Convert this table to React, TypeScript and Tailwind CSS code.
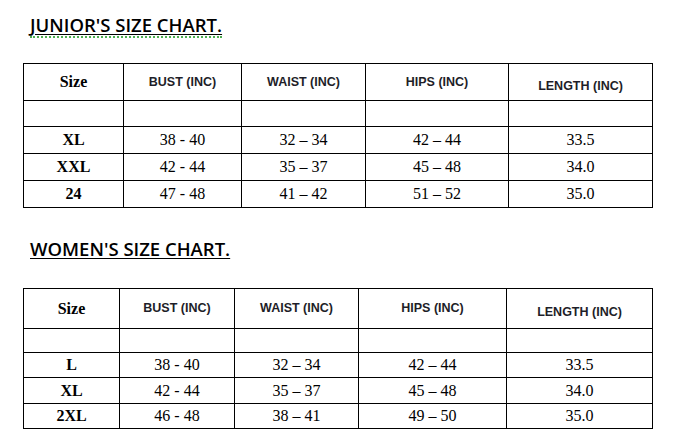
const junior = [
  { size: "XL", bust: "38 - 40", waist: "32 – 34", hips: "42 – 44", length: "33.5" },
  { size: "XXL", bust: "42 - 44", waist: "35 – 37", hips: "45 – 48", length: "34.0" },
  { size: "24", bust: "47 - 48", waist: "41 – 42", hips: "51 – 52", length: "35.0" },
];

const women = [
  { size: "L", bust: "38 - 40", waist: "32 – 34", hips: "42 – 44", length: "33.5" },
  { size: "XL", bust: "42 - 44", waist: "35 – 37", hips: "45 – 48", length: "34.0" },
  { size: "2XL", bust: "46 - 48", waist: "38 – 41", hips: "49 – 50", length: "35.0" },
];

type Row = (typeof junior)[number];

const cell = "border border-black text-center p-0";
const head = "font-['Liberation_Sans',sans-serif] font-bold text-[12.5px] text-[#1e1e28]";
const serif = "font-['Liberation_Serif',serif] text-[16px] text-black";
const title = "font-['Open_Sans',sans-serif] font-semibold text-[18.5px] text-black underline underline-offset-2";

function SizeTable({
  rows,
  widths,
  heights,
}: {
  rows: Row[];
  widths: string[];
  heights: string[];
}) {
  return (
    <table className="ml-[23px] border-collapse table-fixed">
      <colgroup>
        {widths.map((w, i) => (
          <col key={i} className={w} />
        ))}
      </colgroup>
      <tbody>
        <tr className={heights[0]}>
          <td className={`${cell} ${serif} font-bold`}>Size</td>
          <td className={`${cell} ${head}`}>BUST (INC)</td>
          <td className={`${cell} ${head}`}>WAIST (INC)</td>
          <td className={`${cell} ${head}`}>HIPS (INC)</td>
          <td className={`${cell} ${head} pt-[8px]`}>LENGTH (INC)</td>
        </tr>
        <tr className={heights[1]}>
          <td className={cell} />
          <td className={cell} />
          <td className={cell} />
          <td className={cell} />
          <td className={cell} />
        </tr>
        {rows.map((r, i) => (
          <tr key={r.size} className={heights[i + 2]}>
            <td className={`${cell} ${serif} font-bold`}>{r.size}</td>
            <td className={`${cell} ${serif}`}>{r.bust}</td>
            <td className={`${cell} ${serif}`}>{r.waist}</td>
            <td className={`${cell} ${serif}`}>{r.hips}</td>
            <td className={`${cell} ${serif}`}>{r.length}</td>
          </tr>
        ))}
      </tbody>
    </table>
  );
}

export default function App() {
  return (
    <div className="w-[681px] h-[445px] bg-white overflow-hidden">
      <div className="pt-[14px] pl-[30px] h-[63px]">
        <span className="inline-block border-b-2 border-dotted border-[#4caf50] leading-none pb-[1px]">
          <span className={title}>JUNIOR'S SIZE CHART.</span>
        </span>
      </div>
      <SizeTable
        rows={junior}
        widths={["w-[100px]", "w-[118px]", "w-[124px]", "w-[143px]", "w-[144px]"]}
        heights={["h-[37px]", "h-[26px]", "h-[27px]", "h-[27px]", "h-[27px]"]}
      />
      <div className="pt-[32px] pl-[30px] h-[80px] leading-none">
        <span className={title}>WOMEN'S SIZE CHART.</span>
      </div>
      <SizeTable
        rows={women}
        widths={["w-[96px]", "w-[115px]", "w-[124px]", "w-[148px]", "w-[146px]"]}
        heights={["h-[40px]", "h-[24px]", "h-[25px]", "h-[26px]", "h-[25px]"]}
      />
    </div>
  );
}
